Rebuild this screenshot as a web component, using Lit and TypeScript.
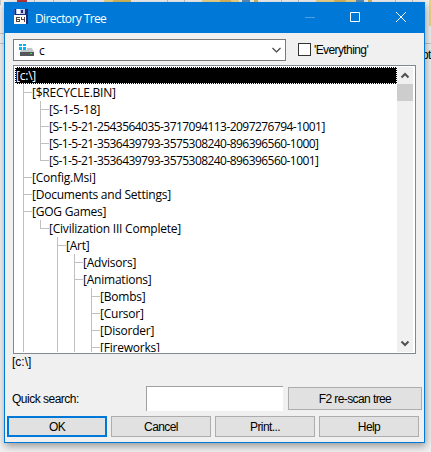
import { LitElement, html, css, svg } from "lit";
import { customElement } from "lit/decorators.js";

interface Row { text: string; depth: number; rails: number[]; last?: boolean; }

const ROWS: Row[] = [
  { text: "[$RECYCLE.BIN]", depth: 1, rails: [] },
  { text: "[S-1-5-18]", depth: 2, rails: [1] },
  { text: "[S-1-5-21-2543564035-3717094113-2097276794-1001]", depth: 2, rails: [1] },
  { text: "[S-1-5-21-3536439793-3575308240-896396560-1000]", depth: 2, rails: [1] },
  { text: "[S-1-5-21-3536439793-3575308240-896396560-1001]", depth: 2, rails: [1], last: true },
  { text: "[Config.Msi]", depth: 1, rails: [] },
  { text: "[Documents and Settings]", depth: 1, rails: [] },
  { text: "[GOG Games]", depth: 1, rails: [] },
  { text: "[Civilization III Complete]", depth: 2, rails: [1], last: true },
  { text: "[Art]", depth: 3, rails: [1] },
  { text: "[Advisors]", depth: 4, rails: [1, 3] },
  { text: "[Animations]", depth: 4, rails: [1, 3] },
  { text: "[Bombs]", depth: 5, rails: [1, 3, 4] },
  { text: "[Cursor]", depth: 5, rails: [1, 3, 4] },
  { text: "[Disorder]", depth: 5, rails: [1, 3, 4] },
  { text: "[Fireworks]", depth: 5, rails: [1, 3, 4] },
];

const railX = (d: number) => 8.5 + (d - 1) * 17;

@customElement("app-root")
export class AppRoot extends LitElement {
  static styles = css`
    :host { display: block; position: relative; width: 431px; height: 452px; overflow: hidden;
      background: #f1f1f1; font: 12px "Liberation Sans", Arial, sans-serif; color: #000; }
    * { box-sizing: border-box; }
    .backdrop { position: absolute; inset: 0; display: block; }
    .behind { letter-spacing: -.6px; }
    .window { position: absolute; left: 4px; top: 2px; width: 421px; height: 441px; background: #f0f0f0;
      border: 1px solid #0078d7; display: flex; flex-direction: column; box-shadow: 1px 3px 8px rgba(0,0,0,.38); }
    .title { height: 30px; flex: none; background: #0078d7; color: #fff; display: flex; align-items: center; padding-left: 8px; }
    .title .name { font: 12px "Open Sans", sans-serif; letter-spacing: -.6px; margin-left: 6px; flex: 1; white-space: nowrap; }
    .title svg { display: block; flex: none; }
    .title .disk { margin-bottom: 2px; }
    .top { display: flex; margin: 6px 0 0 8px; height: 22px; flex: none; }
    .combo { width: 273px; height: 22px; border: 1px solid #7a7a7a; background: #fff; display: flex; align-items: center; padding: 0 4px 0 5px; }
    .combo .value { flex: 1; font: 12px "Open Sans", sans-serif; margin-left: 4px; }
    .check { width: 13px; height: 13px; border: 1px solid #333; background: #fff; margin: 4px 3px 0 12px; }
    .small { letter-spacing: -.6px; white-space: nowrap; }
    .every { line-height: 22px; }
    .list { margin: 4px 0 0 8px; width: 403px; height: 289px; flex: none; border: 1px solid #828790; background: #fff; padding: 1px; display: flex; }
    .rows { flex: 1; height: 285px; overflow: hidden; }
    .root { height: 17px; background: #000; color: #fff; border: 1px dotted #fff; display: flex; align-items: center; }
    .row { height: 17px; display: flex; align-items: center; }
    .row svg { display: block; flex: none; }
    .label { font: 12px/17px "Open Sans", sans-serif; letter-spacing: -.22px; white-space: nowrap; }
    .digits { letter-spacing: -.55px; }
    .bar { width: 16px; margin-right: 1px; background: #f0f0f0; flex: none; display: flex; flex-direction: column; }
    .thumb { height: 17px; background: #cdcdcd; }
    .grow { flex: 1; }
    .path { height: 14px; line-height: 14px; margin: 1px 0 0 7px; flex: none; }
    .search { display: flex; height: 25px; margin: 17px 0 0 7px; flex: none; }
    .search .cap { width: 134px; line-height: 26px; letter-spacing: -.5px; }
    .field { width: 137px; height: 25px; background: #fff; border-top: 1px solid #a0a0a0; border-left: 1px solid #a0a0a0; }
    .btn { height: 21px; width: 100px; background: #e1e1e1; border: 1px solid #adadad; display: flex; align-items: center; justify-content: center; }
    .scan { width: 134px; height: 23px; margin: 1px 0 0 5px; }
    .actions { display: flex; gap: 4px; margin: 5px 0 0 2px; flex: none; }
    .ok { border: 2px solid #0078d7; }
  `;

  private row(r: Row) {
    const w = 17 + (r.depth - 1) * 17;
    const x = railX(r.depth);
    return html`<div class="row">
      <svg width=${w} height="17" shape-rendering="crispEdges" stroke="#c0c0c0" fill="none">
        ${r.rails.map((d) => (d === r.depth ? null : svg`<path d=${`M${railX(d)} 0V17`} />`))}
        <path d=${`M${x} 0V${r.last ? 8.5 : 17}M${x} 8.5H${w}`} />
      </svg><span class=${r.text.length > 40 ? "label digits" : "label"}>${r.text}</span></div>`;
  }

  render() {
    return html`
      <svg class="backdrop" width="431" height="452" shape-rendering="crispEdges">
        <path fill="#ecd489" d="M104 0h27v2h-27zM202 0h37v2h-37zM316 0h40v2h-40zM429 0h2v26h-2z" />
        <path fill="#d9b75c" d="M113 0h18v2h-18zM220 0h11v2h-11zM254 0h4v2h-4zM334 0h12v2h-12zM368 0h4v2h-4z" />
        <path fill="#b8383a" d="M17 0h10v2H17z" />
        <path fill="#5b8fb4" d="M242 0h8v2h-8zM356 0h8v2h-8z" />
        <path fill="#c4c4c4" d="M0 0h1v5H0zM0 33h4v1H0zM0 43h4v1H0zM425 43h6v1h-6zM34 0h1v2h-1zM53 0h1v2h-1zM70 0h1v2h-1zM167 0h1v2h-1zM184 0h1v2h-1zM281 0h1v2h-1zM298 0h1v2h-1zM395 0h1v2h-1zM412 0h1v2h-1z" />
        <text class="behind" x="422" y="59">ot</text>
      </svg>
      <div class="window">
        <div class="title">
          <svg class="disk" width="16" height="16" viewBox="0 0 16 16" shape-rendering="crispEdges">
            <path fill="#1e2a78" d="M0 0h14l1 1v14H1L0 14z" /><path fill="#3f57b8" d="M0 0h1v14H0zM1 0h1v6H1z" />
            <path fill="#b9c8e6" d="M3 0h9v5H3z" /><path fill="#fff" d="M4 0h3v5H4z" /><path fill="#1e2a78" d="M8 1h2v3H8z" />
            <path fill="#fbf8f2" d="M1 6h12v9H1z" />
            <path fill="#51473f" d="M3 8h4v1H3zM3 9h1v4H3zM4 10h3v1H4zM6 11h1v2H6zM4 12h2v1H4zM8 8h1v3H8zM9 10h2v1H9zM11 8h1v5h-1z" />
          </svg>
          <span class="name">Directory Tree</span>
          <svg width="134" height="30" fill="none" stroke="#fff">
            <path stroke="#4da1e3" d="M15 14.500H25" /><path d="M60.500 9.500h9v9h-9z" /><path d="M106 9l10 10M116 9l-10 10" />
          </svg>
        </div>
        <div class="top">
          <div class="combo">
            <svg width="16" height="16"><path fill="#00b4ef" d="M0 2h3v2H0zM4 2h3v2H4zM0 5h3v3H0zM4 5h3v3H4z" />
              <path fill="#c4c7c9" d="M8 6h5l2 4H1l1-2h6z" /><path fill="#55585b" d="M1 10h14v4H1z" /><path fill="#39e64a" d="M11 11h2v1h-2z" /></svg>
            <span class="value">c</span>
            <svg width="9" height="6"><path d="M.5 1l4 4 4-4" fill="none" stroke="#444" stroke-width="1.2" /></svg>
          </div>
          <div class="check"></div><span class="small every">'Everything'</span>
        </div>
        <div class="list">
          <div class="rows">
            <div class="root"><span class="label">[c:\\]</span></div>
            ${ROWS.map((r) => this.row(r))}
          </div>
          <div class="bar">
            <svg width="16" height="17"><path d="M4.500 10.500l3.500-3.500 3.500 3.500" fill="none" stroke="#505050" stroke-width="2" /></svg>
            <div class="thumb"></div><div class="grow"></div>
            <svg width="16" height="17"><path d="M4.500 6.500l3.500 3.500 3.500-3.500" fill="none" stroke="#505050" stroke-width="2" /></svg>
          </div>
        </div>
        <div class="path">[c:\\]</div>
        <div class="search"><span class="small cap">Quick search:</span><div class="field"></div>
          <div class="btn scan"><span class="small">F2 re-scan tree</span></div></div>
        <div class="actions">
          <div class="btn ok"><span class="small">OK</span></div><div class="btn"><span class="small">Cancel</span></div>
          <div class="btn"><span class="small">Print...</span></div><div class="btn"><span class="small">Help</span></div>
        </div>
      </div>`;
  }
}
